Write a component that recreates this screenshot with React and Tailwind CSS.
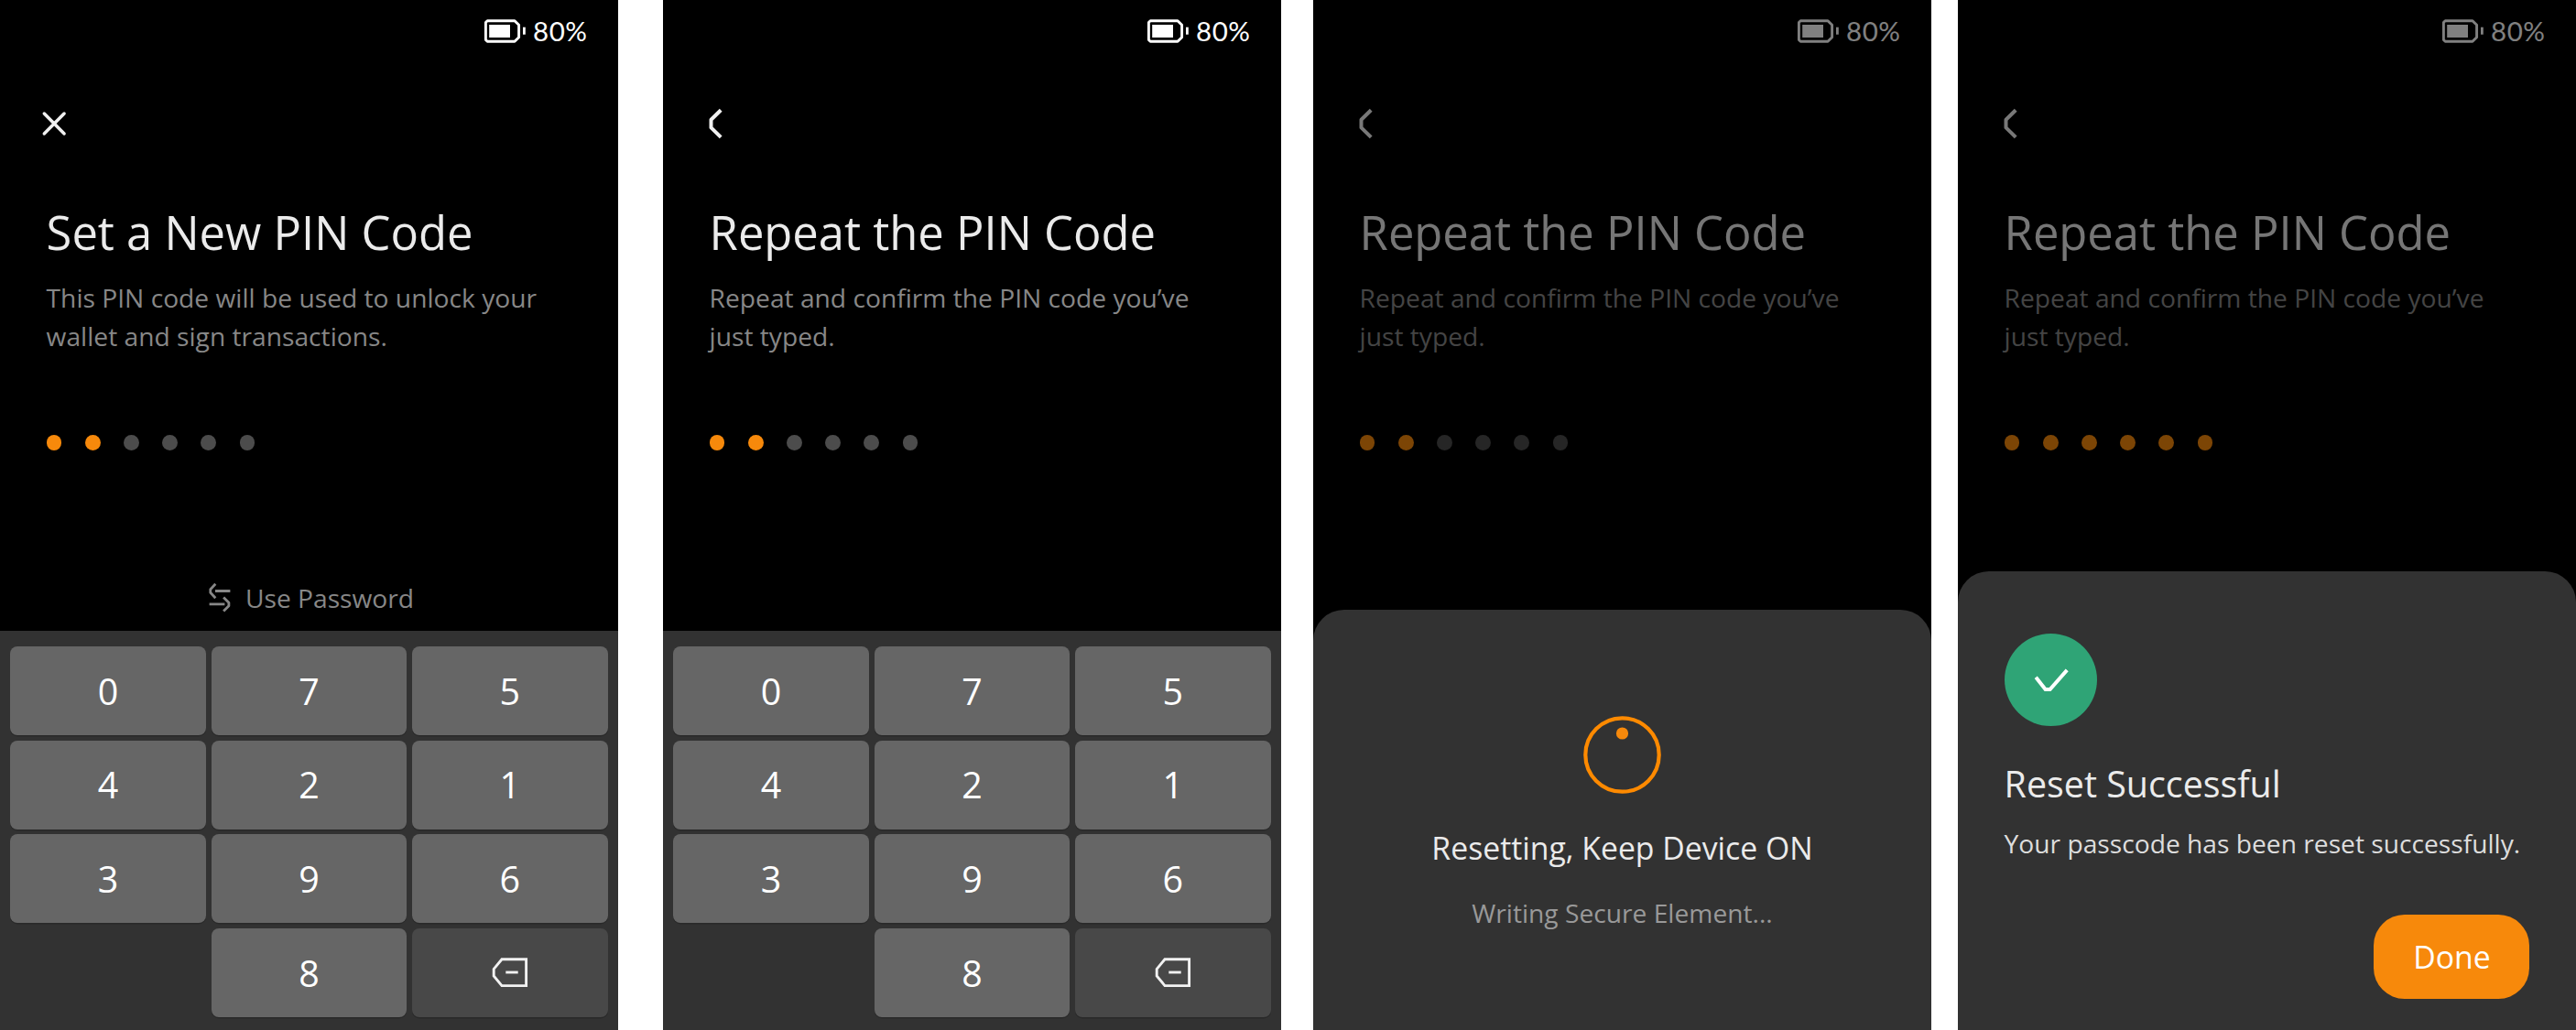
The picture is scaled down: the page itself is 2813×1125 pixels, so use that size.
const SANS = 'font-["Open_Sans","Noto_Sans",sans-serif]';

function Battery() {
  return (
    <svg className="h-[28px] w-[48px]" viewBox="0 0 48 28" fill="none">
      <path d="M4.2 2.7H34L38.6 7.3V20.7L34 25.3H4.2L2.4 23.5V4.5Z" stroke="currentColor" strokeWidth="2.9" strokeLinejoin="round" />
      <rect x="6.2" y="7" width="22.8" height="14" fill="currentColor" />
      <rect x="43" y="9.7" width="2.8" height="8" fill="currentColor" />
    </svg>
  );
}

function CloseIcon() {
  return (
    <svg className="h-[40px] w-[40px]" viewBox="0 0 40 40" fill="none" stroke="currentColor" strokeWidth="3.5" strokeLinecap="round">
      <path d="M9.3 9.1L31.1 30.9M31.1 9.1L9.3 30.9" />
    </svg>
  );
}

function BackIcon() {
  return (
    <svg className="h-[40px] w-[40px]" viewBox="0 0 40 40" fill="none" stroke="currentColor" strokeWidth="4" strokeLinejoin="round">
      <path d="M24.2 5.2L13.5 15.7V24.4L24.2 34.9" />
    </svg>
  );
}

function SwapIcon() {
  return (
    <svg className="h-[34px] w-[28px]" viewBox="0 0 28 34" fill="none" stroke="currentColor" strokeWidth="2.8" strokeLinejoin="round">
      <path d="M9.3 1.8L3.8 7.7V11.3L9.3 17.2M9 9.5H25.4M18.1 16.4L23.9 22.2V25.7L18.1 31.5M2.6 23.8H19.4" />
    </svg>
  );
}

function DeleteIcon() {
  return (
    <svg className="h-[36px] w-[42px]" viewBox="0 0 42 36" fill="none" stroke="currentColor" strokeWidth="2.9">
      <path d="M12 3.8H38.6V32.6H12L3.2 22V14.4Z" />
      <path d="M16.3 18H29.7" />
    </svg>
  );
}

function StatusBar() {
  return (
    <div className="flex h-[68px] items-center justify-end pr-[33.4px] text-white">
      <Battery />
      <span className="ml-[6px] font-['Lato',sans-serif] text-[29.5px] leading-[68px] tracking-[0.6px]">80%</span>
    </div>
  );
}

function Dots({ filled }) {
  return (
    <div className="mt-[86.6px] flex gap-[25.3px]">
      {[0, 1, 2, 3, 4, 5].map((i) => (
        <span key={i} className={i < filled ? "size-[16.9px] rounded-full bg-[#f7890b]" : "size-[16.9px] rounded-full bg-[#4c4c4c]"} />
      ))}
    </div>
  );
}

function Header({ icon, title, lines, filled, dim }) {
  return (
    <div className={dim ? "opacity-50" : ""}>
      <StatusBar />
      <div className="flex h-[134px] items-center pl-[39px] text-[#f0f0f0]">{icon}</div>
      <div className="pt-[18px] pl-[50.6px]">
        <h1 className="whitespace-nowrap text-[50.7px] leading-[68px] font-normal text-[#ebebeb]">{title}</h1>
        <p className="mt-[16px] text-[28.2px] leading-[42.2px] whitespace-nowrap text-[#878787]">
          {lines[0]}
          <br />
          {lines[1]}
        </p>
        <Dots filled={filled} />
      </div>
    </div>
  );
}

function Phone({ children }) {
  return <section className="relative flex h-[1125px] w-[675px] flex-col overflow-hidden bg-black">{children}</section>;
}

const KEY = "flex items-center justify-center rounded-[8px] shadow-[0_1.4px_0_#292929]";

function Keypad() {
  return (
    <div className="mt-auto grid h-[436px] grid-cols-3 grid-rows-[repeat(4,97px)] gap-x-[5.6px] gap-y-[5.67px] bg-[#323232] px-[11.25px] pt-[17px] text-[39.4px] text-white">
      {["0", "7", "5", "4", "2", "1", "3", "9", "6", "", "8"].map((k, i) =>
        k ? (
          <button key={i} className={`${KEY} bg-[#666666] pt-[1.4px]`}>
            {k}
          </button>
        ) : (
          <span key={i} />
        )
      )}
      <button className={`${KEY} bg-[#484848] text-[#f2f2f2]`} aria-label="Delete">
        <DeleteIcon />
      </button>
    </div>
  );
}

const REPEAT = { title: "Repeat the PIN Code", lines: ["Repeat and confirm the PIN code you’ve", "just typed."], icon: <BackIcon /> };

export default function App() {
  return (
    <main className={`flex h-[1125px] w-[2813px] bg-white ${SANS}`}>
      <Phone>
        <Header icon={<CloseIcon />} title="Set a New PIN Code" lines={["This PIN code will be used to unlock your", "wallet and sign transactions."]} filled={2} />
        <div className="mt-auto flex h-[72px] items-center justify-center gap-[13.5px] pl-[3.5px] text-[28.2px] text-[#878787]">
          <SwapIcon />
          <span>Use Password</span>
        </div>
        <div>
          <Keypad />
        </div>
      </Phone>
      <div className="w-[49px]" />
      <Phone>
        <Header {...REPEAT} filled={2} />
        <Keypad />
      </Phone>
      <div className="w-[35px]" />
      <Phone>
        <Header {...REPEAT} filled={2} dim />
        <div className="mt-auto flex h-[459px] flex-col items-center rounded-t-[33.75px] bg-[#323232] pt-[115.5px]">
          <svg className="size-[85px]" viewBox="0 0 85 85">
            <circle cx="42.5" cy="42.5" r="40.2" fill="none" stroke="#ff8a00" strokeWidth="4.2" />
            <circle cx="42.5" cy="19" r="6.6" fill="#f7890b" />
          </svg>
          <h2 className="mt-[34.2px] text-[33.75px] leading-[50px] text-[#ebebeb]">Resetting, Keep Device ON</h2>
          <p className="mt-[25.5px] text-[28.2px] leading-[42px] text-[#999999]">Writing Secure Element...</p>
        </div>
      </Phone>
      <div className="w-[29px]" />
      <Phone>
        <Header {...REPEAT} filled={6} dim />
        <div className="mt-auto flex h-[501px] flex-col rounded-t-[33.75px] bg-[#323232] px-[50.6px] pt-[67.5px]">
          <div className="flex size-[101.25px] items-center justify-center rounded-full bg-[#2fa476]">
            <svg className="h-[30px] w-[40px]" viewBox="0 0 40 30" fill="none" stroke="white" strokeWidth="4">
              <path d="M4.2 12.8L14.6 26H19.6L38.2 4.9" />
            </svg>
          </div>
          <h2 className="mt-[35.25px] text-[39.4px] leading-[56px] text-[#ebebeb]">Reset Successful</h2>
          <p className="mt-[16px] text-[28.2px] leading-[42px] whitespace-nowrap text-[#dddddd]">Your passcode has been reset successfully.</p>
          <button className="mt-[56.5px] h-[92.8px] w-[170px] self-end rounded-[33.75px] bg-[#f7890b] text-[33.75px] text-white">Done</button>
        </div>
      </Phone>
    </main>
  );
}
